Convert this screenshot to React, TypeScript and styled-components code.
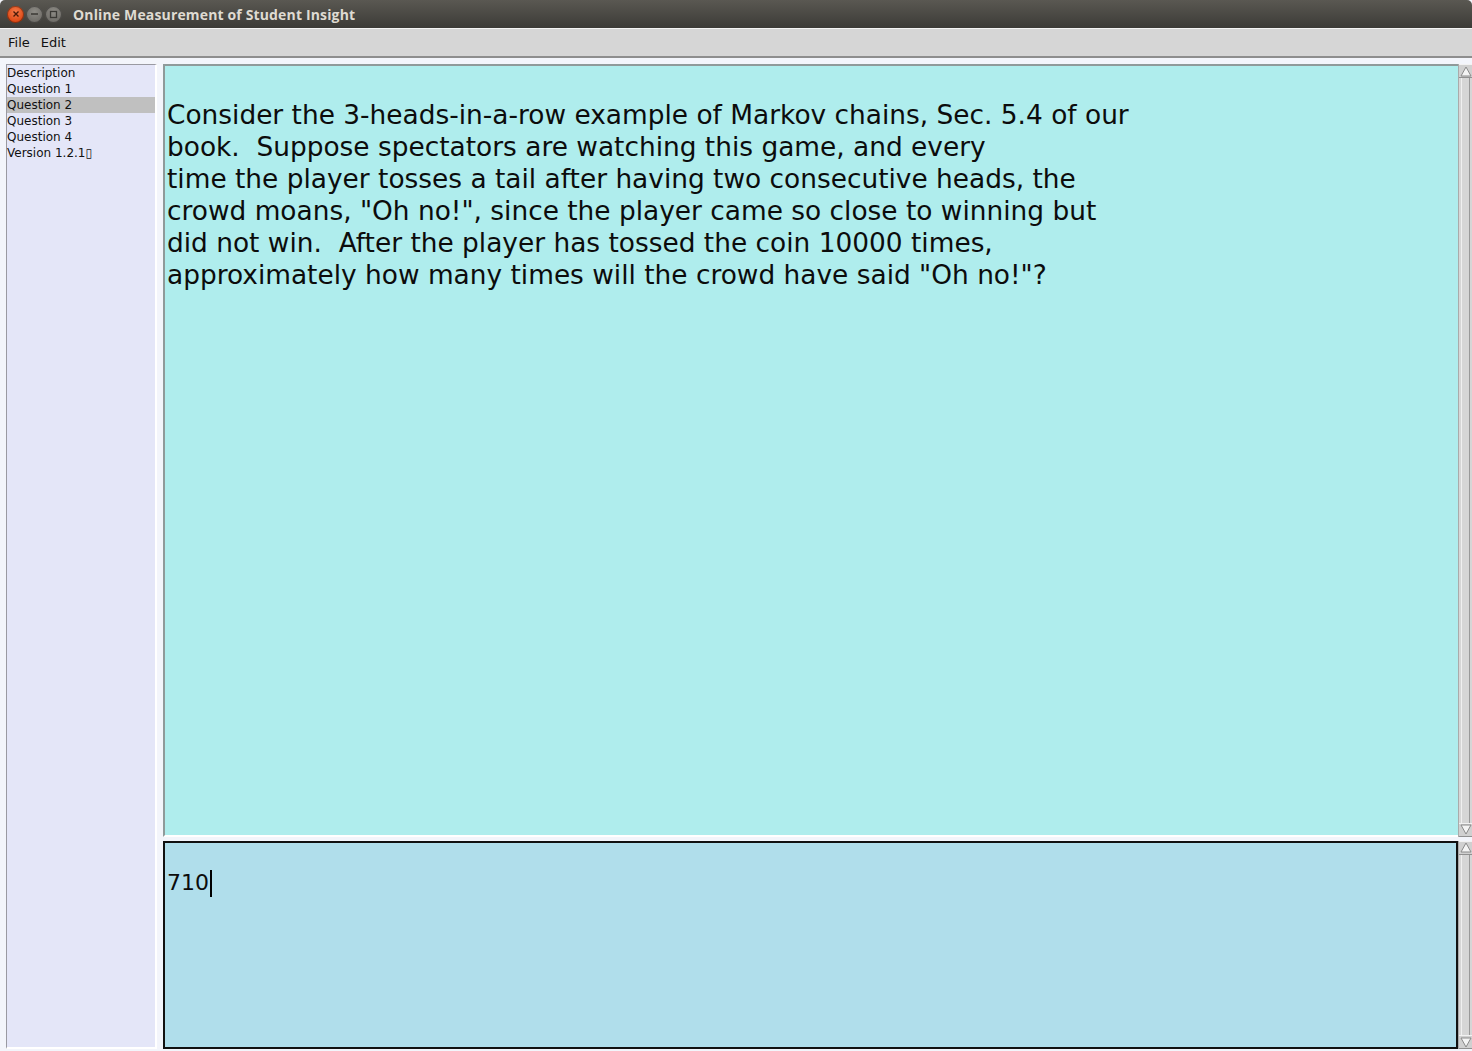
import React from "react";
import styled, { createGlobalStyle } from "styled-components";

const Global = createGlobalStyle`
  html, body { margin: 0; padding: 0; }
  body { width: 1472px; height: 1051px; overflow: hidden; background: #eef0f8; font-family: "DejaVu Sans", sans-serif; }
  #root { width: 1472px; height: 1051px; }
`;

const Window = styled.div`
  width: 1472px;
  height: 1051px;
  display: flex;
  flex-direction: column;
  background: #f3f5fb;
`;

const TitleBar = styled.div`
  height: 28px;
  flex: none;
  display: flex;
  align-items: center;
  padding-left: 7px;
  background: linear-gradient(#5a5852, #3c3b37);
  border-radius: 5px 5px 0 0;
`;

const WinButtons = styled.div`
  display: flex;
  gap: 2px;
  margin-right: 11px;
`;

const WinButton = styled.div<{ $close?: boolean }>`
  width: 17px;
  height: 17px;
  border-radius: 50%;
  display: flex;
  align-items: center;
  justify-content: center;
  background: ${(p) =>
    p.$close
      ? "radial-gradient(circle at 50% 35%, #f47a4a, #dd4814 70%, #b93a10)"
      : "radial-gradient(circle at 50% 35%, #8e8c86, #6f6d68 70%, #5b5954)"};
  box-shadow: inset 0 0 0 1px rgba(0, 0, 0, 0.35);
`;

const Title = styled.div`
  color: #dfdbd2;
  font-family: "Open Sans", "DejaVu Sans", sans-serif;
  font-weight: 700;
  font-size: 14px;
  letter-spacing: 0.15px;
`;

const MenuBar = styled.div`
  flex: none;
  display: flex;
  align-items: center;
  gap: 11px;
  padding-left: 8px;
  background: #d6d6d6;
  border-top: 1px solid #f4f4f4;
  border-bottom: 2px solid #8e8e8e;
  box-sizing: border-box;
  height: 30px;
`;

const MenuItem = styled.span`
  font-family: "DejaVu Sans", sans-serif;
  font-size: 13px;
  color: #111;
`;

const Body = styled.div`
  flex: 1;
  display: flex;
  gap: 6px;
  padding: 6px 0 2px 6px;
  min-height: 0;
`;

const Sidebar = styled.div`
  width: 151px;
  flex: none;
  background: #e4e6f8;
  border-top: 1px solid #9a9aa2;
  border-left: 1px solid #9a9aa2;
  border-right: 2px solid #ffffff;
  border-bottom: 2px solid #ffffff;
  box-sizing: border-box;
  display: flex;
  flex-direction: column;
`;

const NavItem = styled.div<{ $selected?: boolean }>`
  height: 16px;
  line-height: 16px;
  font-family: "DejaVu Sans", sans-serif;
  font-size: 12px;
  color: #111;
  background: ${(p) => (p.$selected ? "#c0c0c0" : "transparent")};
`;

const Main = styled.div`
  flex: 1;
  display: flex;
  flex-direction: column;
  gap: 4px;
  min-width: 0;
`;

const PaneRow = styled.div<{ $grow: number }>`
  flex: ${(p) => p.$grow};
  display: flex;
  min-height: 0;
`;

const QuestionPane = styled.div`
  flex: 1;
  background: #afeded;
  border-top: 2px solid #8f9a9a;
  border-left: 2px solid #8f9a9a;
  border-bottom: 2px solid #ffffff;
  box-sizing: border-box;
  padding: 33px 0 0 2px;
  font-family: "DejaVu Sans", sans-serif;
  font-size: 26.4px;
  line-height: 32px;
  color: #0c0c0c;
  white-space: pre;
  overflow: hidden;
`;

const AnswerPane = styled.div`
  flex: 1;
  background: #b0deeb;
  border: 2px solid #111;
  box-sizing: border-box;
  padding: 24px 0 0 2px;
  font-family: "DejaVu Sans", sans-serif;
  font-size: 22px;
  line-height: 32px;
  color: #0c0c0c;
  display: flex;
  align-items: flex-start;
`;

const Caret = styled.span`
  display: inline-block;
  width: 2px;
  height: 27px;
  background: #000;
  margin-top: 3px;
  margin-left: 1px;
`;

const ScrollBar = styled.div`
  width: 14px;
  flex: none;
  display: flex;
  flex-direction: column;
  background: #d6d6d6;
  border-left: 1px solid #aaa;
  box-sizing: border-box;
`;

const Track = styled.div`
  flex: 1;
  margin: 0 2px;
  border-left: 1px solid #f0f0f0;
  border-right: 1px solid #999;
`;

const ArrowBtn = styled.div`
  height: 14px;
  flex: none;
  display: flex;
  align-items: center;
  justify-content: center;
  background: #d0d0d0;
  border-top: 1px solid #f2f2f2;
  border-bottom: 1px solid #909090;
  box-sizing: border-box;
`;

const Arrow = ({ up }: { up?: boolean }) => (
  <svg width="12" height="11" viewBox="0 0 12 11">
    <polygon
      points={up ? "6,1 11,10 1,10" : "1,1 11,1 6,10"}
      fill="#f4f4f4"
      stroke="#8a8a8a"
      strokeWidth="1"
    />
  </svg>
);

const VScroll = () => (
  <ScrollBar>
    <ArrowBtn>
      <Arrow up />
    </ArrowBtn>
    <Track />
    <ArrowBtn>
      <Arrow />
    </ArrowBtn>
  </ScrollBar>
);

const questionText = `Consider the 3-heads-in-a-row example of Markov chains, Sec. 5.4 of our
book.  Suppose spectators are watching this game, and every
time the player tosses a tail after having two consecutive heads, the
crowd moans, "Oh no!", since the player came so close to winning but
did not win.  After the player has tossed the coin 10000 times,
approximately how many times will the crowd have said "Oh no!"?`;

export default function App() {
  return (
    <>
      <Global />
      <Window>
        <TitleBar>
          <WinButtons>
            <WinButton $close>
              <svg width="8" height="8" viewBox="0 0 8 8">
                <path d="M1.5 1.5 L6.5 6.5 M6.5 1.5 L1.5 6.5" stroke="#4a1a08" strokeWidth="1.4" />
              </svg>
            </WinButton>
            <WinButton>
              <svg width="9" height="8" viewBox="0 0 9 8">
                <path d="M1 4 H8" stroke="#3a3935" strokeWidth="1.5" />
              </svg>
            </WinButton>
            <WinButton>
              <svg width="9" height="9" viewBox="0 0 9 9">
                <rect x="1.5" y="1.5" width="6" height="6" fill="none" stroke="#3a3935" strokeWidth="1.3" />
              </svg>
            </WinButton>
          </WinButtons>
          <Title>Online Measurement of Student Insight</Title>
        </TitleBar>
        <MenuBar>
          <MenuItem>File</MenuItem>
          <MenuItem>Edit</MenuItem>
        </MenuBar>
        <Body>
          <Sidebar>
            <NavItem>Description</NavItem>
            <NavItem>Question 1</NavItem>
            <NavItem $selected>Question 2</NavItem>
            <NavItem>Question 3</NavItem>
            <NavItem>Question 4</NavItem>
            <NavItem>Version 1.2.1{"\u25AF"}</NavItem>
          </Sidebar>
          <Main>
            <PaneRow $grow={772}>
              <QuestionPane>{questionText}</QuestionPane>
              <VScroll />
            </PaneRow>
            <PaneRow $grow={208}>
              <AnswerPane>
                710
                <Caret />
              </AnswerPane>
              <VScroll />
            </PaneRow>
          </Main>
        </Body>
      </Window>
    </>
  );
}
